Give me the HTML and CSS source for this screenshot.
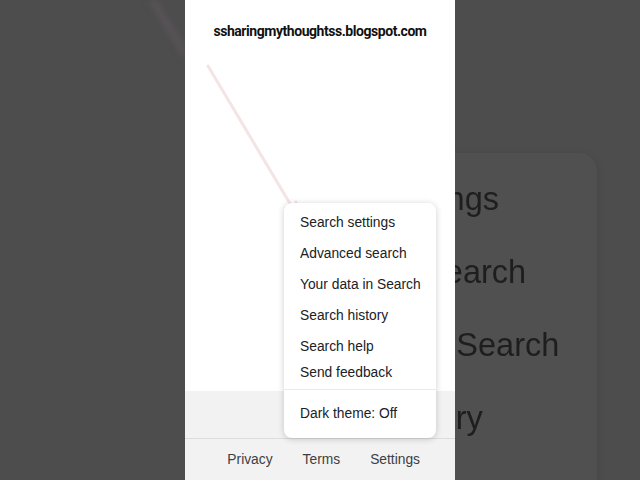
FILE: index.html
```html
<!DOCTYPE html>
<html>
<head>
<meta charset="utf-8">
<link rel="stylesheet" href="styles.css">
</head>
<body>
<div class="stage">
  <div class="side side-left">
    <svg class="streak" width="185" height="80" viewBox="0 0 185 80"><line x1="150" y1="-4" x2="190" y2="62" stroke="#5a5458" stroke-width="7" stroke-linecap="round"/></svg>
  </div>
  <div class="phone">
    <header class="brand">ssharingmythoughtss.blogspot.com</header>
    <main class="canvas">
      <svg class="arrow" width="130" height="230" viewBox="0 0 130 230"><g fill="none" stroke="#f4e4e4" stroke-width="3" stroke-linecap="round" stroke-linejoin="round"><line x1="23" y1="66" x2="110" y2="212"/><polyline points="101,208 110,212 111,202"/></g></svg>
      <nav class="menu">
        <div class="item">Search settings</div>
        <div class="item">Advanced search</div>
        <div class="item">Your data in Search</div>
        <div class="item">Search history</div>
        <div class="item">Search help</div>
        <div class="item item-last">Send feedback</div>
        <div class="divider"></div>
        <div class="item item-theme">Dark theme: Off</div>
      </nav>
    </main>
    <footer class="foot">
      <div class="foot-top"></div>
      <div class="foot-links">
        <span>Privacy</span>
        <span>Terms</span>
        <span>Settings</span>
      </div>
    </footer>
  </div>
  <div class="side side-right">
    <div class="ghost-card">
      <div class="ghost-item">Search settings</div>
      <div class="ghost-item">Advanced search</div>
      <div class="ghost-item">Your data in Search</div>
      <div class="ghost-item">Search history</div>
    </div>
  </div>
</div>
</body>
</html>
```

FILE: styles.css
```css
html, body {
  margin: 0;
  padding: 0;
}
body {
  width: 640px;
  height: 480px;
  overflow: hidden;
  background: #4d4d4d;
  font-family: "Liberation Sans", Arial, sans-serif;
}
.stage {
  display: flex;
  width: 640px;
  height: 480px;
}
.side {
  height: 480px;
  overflow: hidden;
  position: relative;
}
.side-left {
  width: 185px;
  flex: none;
}
.streak {
  display: block;
  filter: blur(3px);
}
.side-right {
  flex: 1;
}
.ghost-card {
  margin-left: -220px;
  margin-top: 153px;
  width: 362px;
  height: 600px;
  background: #505050;
  border-radius: 18px;
  box-shadow: 0 2px 8px rgba(0,0,0,0.1);
  padding: 10px 0 0 40px;
  box-sizing: border-box;
  filter: blur(0.7px);
}
.ghost-item {
  font-size: 32.5px;
  line-height: 73px;
  color: #1e1e1e;
  white-space: nowrap;
}
.phone {
  width: 270px;
  flex: none;
  background: #fff;
  display: flex;
  flex-direction: column;
  position: relative;
}
.brand {
  height: 62px;
  display: flex;
  align-items: center;
  justify-content: center;
  font-family: Roboto, "Liberation Sans", sans-serif;
  font-weight: 700;
  font-size: 14px;
  letter-spacing: -0.45px;
  color: #111;
}
.canvas {
  flex: 1;
}
.arrow {
  position: absolute;
  left: 0;
  top: 0;
}
.menu {
  position: absolute;
  left: 99px;
  top: 203px;
  width: 152px;
  height: 235px;
  background: #fff;
  border-radius: 8px;
  box-shadow: 0 1px 6px rgba(32,33,36,0.22);
  padding-top: 4px;
  box-sizing: border-box;
  z-index: 2;
}
.item {
  padding-left: 16px;
  font-size: 13.8px;
  line-height: 31px;
  color: #202124;
  white-space: nowrap;
}
.item-last {
  line-height: 21px;
  margin-bottom: 6px;
}
.divider {
  height: 1px;
  background: #e8eaed;
}
.item-theme {
  line-height: 48px;
}
.foot {
  background: #f2f2f2;
  flex: none;
}
.foot-top {
  height: 47px;
  border-bottom: 1px solid #dadce0;
}
.foot-links {
  height: 41px;
  display: flex;
  justify-content: flex-end;
  align-items: center;
  gap: 30px;
  padding-right: 35px;
  font-size: 13.8px;
  color: #3c4043;
}
```
